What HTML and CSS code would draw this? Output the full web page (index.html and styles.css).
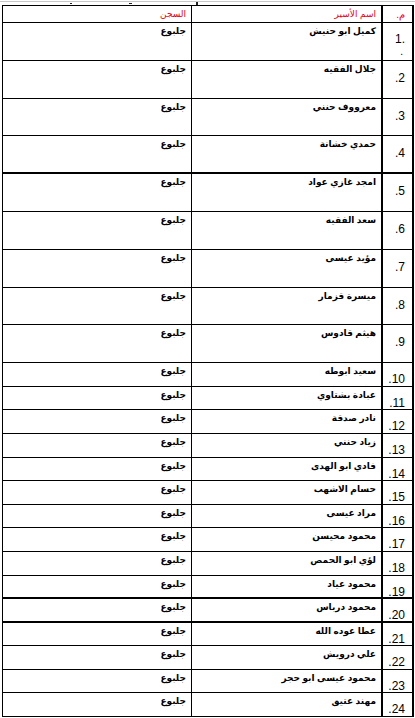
FILE: index.html
```html
<!DOCTYPE html>
<html lang="ar">
<head>
<meta charset="utf-8">
<link rel="stylesheet" href="styles.css">
</head>
<body>
<div class="topline"><span class="tick t1"></span><span class="tick t2"></span><span class="tick t3"></span></div>
<div class="sheet" dir="rtl">
  <div class="row head">
    <div class="c num">م.</div>
    <div class="c name">اسم الأسير</div>
    <div class="c jail">السجن</div>
  </div>
  <div class="row tall">
    <div class="c num first"><span dir="ltr">1.</span><span class="dot">.</span></div>
    <div class="c name">كميل ابو حنيش</div>
    <div class="c jail">جلبوع</div>
  </div>
  <div class="row tall">
    <div class="c num">2.</div>
    <div class="c name">جلال الفقيه</div>
    <div class="c jail">جلبوع</div>
  </div>
  <div class="row tall">
    <div class="c num">3.</div>
    <div class="c name">معرووف حنني</div>
    <div class="c jail">جلبوع</div>
  </div>
  <div class="row tall thick">
    <div class="c num">4.</div>
    <div class="c name">حمدي خشانة</div>
    <div class="c jail">جلبوع</div>
  </div>
  <div class="row tall">
    <div class="c num">5.</div>
    <div class="c name">امجد غازي عواد</div>
    <div class="c jail">جلبوع</div>
  </div>
  <div class="row tall">
    <div class="c num">6.</div>
    <div class="c name">سعد الفقيه</div>
    <div class="c jail">جلبوع</div>
  </div>
  <div class="row tall">
    <div class="c num">7.</div>
    <div class="c name">مؤيد عيسى</div>
    <div class="c jail">جلبوع</div>
  </div>
  <div class="row tall">
    <div class="c num">8.</div>
    <div class="c name">ميسرة قزمار</div>
    <div class="c jail">جلبوع</div>
  </div>
  <div class="row tall">
    <div class="c num">9.</div>
    <div class="c name">هيثم قادوس</div>
    <div class="c jail">جلبوع</div>
  </div>
  <div class="row short">
    <div class="c num">10.</div>
    <div class="c name">سعيد ابوطه</div>
    <div class="c jail">جلبوع</div>
  </div>
  <div class="row short">
    <div class="c num">11.</div>
    <div class="c name">عبادة بشتاوي</div>
    <div class="c jail">جلبوع</div>
  </div>
  <div class="row short">
    <div class="c num">12.</div>
    <div class="c name">نادر صدقة</div>
    <div class="c jail">جلبوع</div>
  </div>
  <div class="row short">
    <div class="c num">13.</div>
    <div class="c name">زياد حنني</div>
    <div class="c jail">جلبوع</div>
  </div>
  <div class="row short">
    <div class="c num">14.</div>
    <div class="c name">فادي ابو الهدى</div>
    <div class="c jail">جلبوع</div>
  </div>
  <div class="row short">
    <div class="c num">15.</div>
    <div class="c name">حسام الاشهب</div>
    <div class="c jail">جلبوع</div>
  </div>
  <div class="row short">
    <div class="c num">16.</div>
    <div class="c name">مراد عيسى</div>
    <div class="c jail">جلبوع</div>
  </div>
  <div class="row short">
    <div class="c num">17.</div>
    <div class="c name">محمود محيسن</div>
    <div class="c jail">جلبوع</div>
  </div>
  <div class="row short">
    <div class="c num">18.</div>
    <div class="c name">لؤي ابو الحمص</div>
    <div class="c jail">جلبوع</div>
  </div>
  <div class="row short thick">
    <div class="c num">19.</div>
    <div class="c name">محمود عياد</div>
    <div class="c jail">جلبوع</div>
  </div>
  <div class="row short thick">
    <div class="c num">20.</div>
    <div class="c name">محمود درباس</div>
    <div class="c jail">جلبوع</div>
  </div>
  <div class="row short">
    <div class="c num">21.</div>
    <div class="c name">عطا عوده الله</div>
    <div class="c jail">جلبوع</div>
  </div>
  <div class="row short">
    <div class="c num">22.</div>
    <div class="c name">علي درويش</div>
    <div class="c jail">جلبوع</div>
  </div>
  <div class="row short">
    <div class="c num">23.</div>
    <div class="c name">محمود عيسى ابو حجر</div>
    <div class="c jail">جلبوع</div>
  </div>
  <div class="row short">
    <div class="c num">24.</div>
    <div class="c name">مهند عتيق</div>
    <div class="c jail">جلبوع</div>
  </div>
</div>
</body>
</html>
```
FILE: styles.css
```css
html, body {
  margin: 0;
  padding: 0;
  background: #fff;
}
body {
  font-family: "Liberation Sans", "DejaVu Sans", Arial, sans-serif;
  color: #000;
  width: 415px;
  height: 718px;
  overflow: hidden;
}
.topline {
  position: relative;
  height: 4px;
  border-top: 1px solid #c8c8c8;
  margin-top: 1px;
  box-sizing: border-box;
}
.tick {
  position: absolute;
  background: #222;
}
.t1 { left: 70px; top: 1px; width: 2px; height: 1px; }
.t2 { left: 129px; top: 1px; width: 3px; height: 1px; }
.t3 { left: 196px; top: 0; width: 2px; height: 3px; }

.sheet {
  margin-left: 2px;
  width: 412px;
  box-sizing: border-box;
  border-top: 1px solid #000;
  border-left: 1px solid #000;
  border-right: 2px solid #000;
}
.row {
  display: grid;
  grid-template-columns: 31px 190px 1fr;
  border-bottom: 1px solid #000;
  box-sizing: border-box;
}
.row.thick { border-bottom-width: 2px; }
.head { height: 17px; }
.tall { height: 37.8px; }
.short { height: 23.6px; }

.c {
  box-sizing: border-box;
  font-weight: bold;
  font-size: 9px;
  line-height: 11px;
  text-align: right;
  white-space: nowrap;
  overflow: hidden;
}
.num {
  border-left: 2px solid #000;
  font-family: "Liberation Sans", Arial, sans-serif;
  font-weight: normal;
  font-size: 12px;
  line-height: 12px;
  padding-right: 7px;
}
.name {
  border-left: 1px solid #000;
  padding-right: 5px;
  padding-top: 3px;
}
.jail {
  padding-right: 5px;
  padding-top: 3px;
}
.tall .num { padding-top: 11px; }
.short .num { padding-top: 10px; }
.tall .num.first {
  display: flex;
  flex-direction: column;
  align-items: flex-start;
  gap: 2px;
  padding-top: 10px;
}
.dot { font-size: 10px; line-height: 10px; padding-right: 2px; }

.head .c {
  color: #e60012;
  font-weight: normal;
  padding-top: 3px;
}
.head .num {
  font-size: 10px;
  line-height: 11px;
  padding-top: 3px;
}
```
